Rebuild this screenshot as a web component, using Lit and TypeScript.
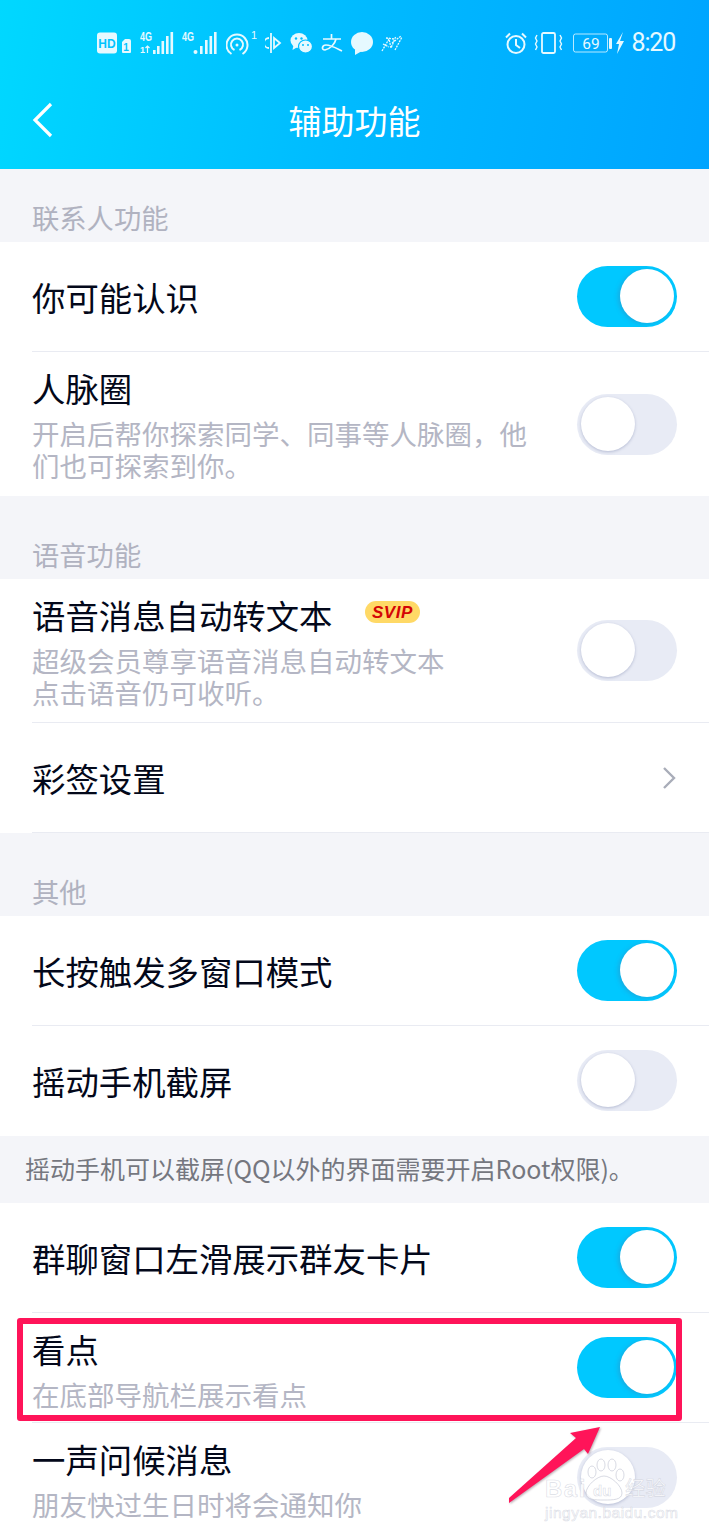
import { LitElement, html, css, nothing } from "lit";
import { customElement, property } from "lit/decorators.js";

@customElement("app-switch")
export class AppSwitch extends LitElement {
  static styles = css`
    :host {
      display: block;
      flex-shrink: 0;
    }
    .track {
      position: relative;
      width: 100px;
      height: 61px;
      border-radius: 31px;
      background: #e8ebf5;
    }
    .track.on {
      background: #00c8ff;
    }
    .thumb {
      position: absolute;
      top: 3px;
      left: 4px;
      width: 54px;
      height: 54px;
      border-radius: 50%;
      background: #fff;
      box-shadow: 0 1px 3px rgba(120, 130, 170, 0.45);
    }
    .on .thumb {
      left: 43px;
      box-shadow: -2px 1px 4px rgba(70, 120, 170, 0.35);
    }
  `;

  @property({ type: Boolean }) on = false;

  render() {
    return html`<div class="track ${this.on ? "on" : ""}"><div class="thumb"></div></div>`;
  }
}

@customElement("app-row")
export class AppRow extends LitElement {
  static styles = css`
    :host {
      display: block;
      background: #fff;
    }
    .row {
      display: flex;
      align-items: center;
      justify-content: space-between;
      box-sizing: border-box;
      height: 110px;
      margin-left: 32px;
      padding-right: 32px;
      border-bottom: 1px solid #e9ebf2;
    }
    :host([last]) .row {
      border-bottom-color: transparent;
    }
    :host([last]) .row.two {
      border-bottom: none;
    }
    .row.two {
      height: 144px;
    }
    .text {
      min-width: 0;
    }
    .sub .text {
      align-self: flex-start;
      padding-top: 14px;
    }
    .title {
      display: flex;
      align-items: center;
      font-size: 33.4px;
      line-height: 44px;
      color: #03081a;
    }
    .desc {
      margin-top: 7px;
      font-size: 27.5px;
      line-height: 32px;
      color: #b4b6c4;
      white-space: pre-line;
    }
    .svip {
      margin: 0 0 6px 32px;
      width: 55px;
      height: 22px;
    }
    .chev {
      width: 16px;
      height: 24px;
    }
  `;

  @property() label = "";
  @property() desc = "";
  @property({ type: Boolean }) on = false;
  @property({ type: Boolean }) svip = false;
  @property({ type: Boolean }) arrow = false;

  render() {
    const kind = this.desc ? (this.desc.includes("\n") ? "sub two" : "sub") : "";
    return html`
      <div class="row ${kind}">
        <div class="text">
          <div class="title">
            ${this.label}
            ${this.svip
              ? html`<svg class="svip" viewBox="0 0 55 22">
                  <rect width="55" height="22" rx="11" fill="#ffd966" />
                  <text
                    x="27.5"
                    y="17"
                    text-anchor="middle"
                    font-family="Liberation Sans, sans-serif"
                    font-size="17"
                    font-weight="700"
                    font-style="italic"
                    letter-spacing="0.6"
                    fill="#d40505"
                  >SVIP</text>
                </svg>`
              : nothing}
          </div>
          ${this.desc ? html`<div class="desc">${this.desc}</div>` : nothing}
        </div>
        ${this.arrow
          ? html`<svg class="chev" viewBox="0 0 16 24" fill="none">
              <path d="M3 2l10 10L3 22" stroke="#a9adb9" stroke-width="2.4" />
            </svg>`
          : html`<app-switch ?on=${this.on}></app-switch>`}
      </div>
    `;
  }
}

@customElement("app-root")
export class AppRoot extends LitElement {
  static styles = css`
    :host {
      display: block;
      width: 709px;
      height: 1536px;
      overflow: hidden;
      position: relative;
      background: #f4f5f9;
      font-family: "Noto Sans CJK SC", "Noto Sans", sans-serif;
    }
    .header {
      height: 169px;
      box-sizing: border-box;
      background: linear-gradient(100deg, #00d8ff 0%, #00baff 50%, #00a4ff 100%);
      color: #fff;
    }
    .status {
      display: flex;
      align-items: center;
      height: 86px;
      padding: 0 34px 0 97px;
      color: #e6f9ff;
    }
    .status svg {
      display: block;
      flex-shrink: 0;
    }
    .status-left {
      display: flex;
      align-items: center;
      gap: 8px;
      flex: 1;
    }
    .status-right {
      display: flex;
      align-items: center;
      gap: 7px;
    }
    .clock {
      font-family: "Roboto", sans-serif;
      font-size: 25px;
      line-height: 28px;
      letter-spacing: -1.2px;
    }
    .nav {
      position: relative;
      display: flex;
      justify-content: center;
      align-items: center;
      height: 67px;
    }
    .nav h1 {
      margin: 0;
      font-size: 33px;
      font-weight: 400;
    }
    .back {
      position: absolute;
      left: 32px;
      top: 16px;
    }
    .section {
      display: flex;
      align-items: flex-end;
      box-sizing: border-box;
      height: 73px;
      padding: 0 0 7px 32px;
      font-size: 27.3px;
      line-height: 36px;
      color: #b0b2c0;
    }
    .section.tall {
      height: 83px;
    }
    .note {
      display: flex;
      align-items: center;
      box-sizing: border-box;
      height: 67px;
      padding: 0 0 3px 25px;
      font-size: 25px;
      color: #75777f;
      white-space: nowrap;
    }
    .tail {
      height: 3px;
      background: #fff;
    }
    .overlay {
      position: absolute;
      left: 0;
      top: 0;
      pointer-events: none;
    }
    .arrow {
      filter: drop-shadow(1px 1px 1px rgba(60, 20, 40, 0.35));
    }
    .mark {
      position: absolute;
      left: 17px;
      top: 1318px;
      width: 665px;
      height: 103px;
      box-sizing: border-box;
      border: 6px solid #ff1459;
      border-radius: 3px;
    }
  `;

  private statusBar() {
    return html`
      <div class="status">
        <div class="status-left">
          <svg width="35" height="22" viewBox="0 0 35 22">
            <rect width="20" height="21" y="0.5" rx="3" fill="currentColor" />
            <text x="10" y="15.5" text-anchor="middle" font-family="Liberation Sans, sans-serif" font-size="12" font-weight="700" fill="#00c4ff">HD</text>
            <path d="M25 10l3-3h4a2 2 0 0 1 2 2v11a1 1 0 0 1-1 1h-7a1 1 0 0 1-1-1z" fill="currentColor" />
            <text x="29" y="19" text-anchor="middle" font-family="Liberation Sans, sans-serif" font-size="10" font-weight="700" fill="#00c4ff">1</text>
          </svg>
          <svg width="34" height="24" viewBox="0 0 34 24">
            <text x="0" y="10" textLength="12" lengthAdjust="spacingAndGlyphs" font-family="Liberation Sans, sans-serif" font-size="12.5" font-weight="700" fill="currentColor">4G</text>
            <text x="0" y="22" font-family="Liberation Sans, sans-serif" font-size="9" font-weight="700" fill="currentColor">1</text>
            <path d="M7.5 22v-7M5.5 17l2-2 2 2" stroke="currentColor" fill="none" stroke-width="1.2" />
            <rect x="13" y="19" width="2.6" height="4" fill="currentColor" />
            <rect x="17" y="15" width="2.6" height="8" fill="currentColor" />
            <rect x="21.5" y="10" width="2.6" height="13" fill="currentColor" />
            <rect x="26" y="5" width="2.6" height="18" fill="currentColor" />
            <rect x="30.5" y="1" width="2.6" height="22" fill="currentColor" />
          </svg>
          <svg width="36" height="24" viewBox="0 0 36 24">
            <text x="0" y="10" textLength="12" lengthAdjust="spacingAndGlyphs" font-family="Liberation Sans, sans-serif" font-size="12.5" font-weight="700" fill="currentColor">4G</text>
            <circle cx="13.5" cy="21" r="2" fill="currentColor" />
            <rect x="18" y="15" width="2.6" height="8" fill="currentColor" />
            <rect x="23" y="9" width="2.6" height="14" fill="currentColor" />
            <rect x="27.5" y="5" width="2.6" height="18" fill="currentColor" />
            <rect x="32" y="1" width="2.6" height="22" fill="currentColor" />
          </svg>
          <svg width="31" height="26" viewBox="0 0 31 26" fill="none" stroke="currentColor" stroke-width="2">
            <path d="M5.5 24a10.5 10.5 0 1 1 11 0" />
            <path d="M8.5 20a6 6 0 1 1 5 0" />
            <circle cx="11" cy="15" r="1.5" fill="currentColor" stroke="none" />
            <text x="25" y="9" font-family="Liberation Sans, sans-serif" font-size="11" fill="currentColor" stroke="none">1</text>
          </svg>
          <svg width="17" height="22" viewBox="0 0 17 22" fill="none" stroke="currentColor" stroke-width="1.8">
            <path d="M6 1v20" />
            <path d="M4 6a5 5 0 0 0 0 10" />
            <path d="M9 6l6 5-6 5z" />
          </svg>
          <svg width="23" height="22" viewBox="0 0 23 22" fill="currentColor">
            <ellipse cx="9" cy="8.5" rx="8.5" ry="7.5" />
            <path d="M3.5 13l-1 5 5-3z" />
            <ellipse cx="15.5" cy="14.5" rx="7" ry="6.5" stroke="#00bdff" stroke-width="1.2" />
            <circle cx="6" cy="6.5" r="1.2" fill="#00bdff" />
            <circle cx="11.5" cy="6.5" r="1.2" fill="#00bdff" />
            <circle cx="13" cy="13" r="1" fill="#00bdff" />
            <circle cx="18" cy="13" r="1" fill="#00bdff" />
          </svg>
          <svg width="22" height="20" viewBox="0 0 22 20" fill="none" stroke="currentColor" stroke-width="1.7">
            <path d="M10.5 1v5M2 6h18" />
            <path d="M15 6c-1 5-6 10-11 11-4 0-3-5 1-5 5 0 10 3 16 6" />
          </svg>
          <svg width="22" height="23" viewBox="0 0 22 23" fill="currentColor">
            <ellipse cx="11" cy="10" rx="11" ry="10" />
            <path d="M4 17l0 6 7-4z" />
          </svg>
          <svg width="22" height="20" viewBox="0 0 22 20" fill="none" stroke="currentColor" stroke-width="1.3" stroke-dasharray="2 1">
            <path d="M1 18L8 6l2 9 5-12" />
            <path d="M5 5l8 1M11 10l9-7M14 17l7-13M2 11l6 3" />
          </svg>
        </div>
        <div class="status-right">
          <svg width="22" height="22" viewBox="0 0 22 22" fill="none" stroke="currentColor" stroke-width="2">
            <circle cx="11" cy="12.5" r="8.5" />
            <path d="M11 7v6l4 3" />
            <path d="M1 5.5L5 1.5M21 5.5L17 1.5" />
          </svg>
          <svg width="32" height="22" viewBox="0 0 32 22" fill="none" stroke="currentColor" stroke-width="1.8">
            <rect x="8" y="1" width="13" height="20" rx="1.5" />
            <path d="M3 3l-1.5 3L3 9l-1.5 3L3 15l-1.5 3M26 3l1.5 3L26 9l1.5 3L26 15l1.5 3" stroke-width="1.4" />
          </svg>
          <svg width="52" height="22" viewBox="0 0 52 22">
            <rect x="0.5" y="2" width="34" height="18" rx="2" fill="none" stroke="currentColor" stroke-width="1" opacity="0.8" />
            <text x="18" y="17" text-anchor="middle" font-family="Roboto, sans-serif" font-size="15.5" fill="currentColor">69</text>
            <rect x="36" y="6" width="3" height="11" rx="1" fill="currentColor" />
            <path d="M50 0L43 12h3l-2 10 7-13h-4z" fill="currentColor" />
          </svg>
          <span class="clock">8:20</span>
        </div>
      </div>
    `;
  }

  render() {
    return html`
      <div class="header">
        ${this.statusBar()}
        <div class="nav">
          <svg class="back" width="22" height="36" viewBox="0 0 22 36" fill="none">
            <path d="M19 2L3 18l16 16" stroke="#fff" stroke-width="3.2" />
          </svg>
          <h1>辅助功能</h1>
        </div>
      </div>

      <div class="section">联系人功能</div>
      <app-row label="你可能认识" on></app-row>
      <app-row last label="人脉圈" desc="开启后帮你探索同学、同事等人脉圈，他
们也可探索到你。"></app-row>

      <div class="section tall">语音功能</div>
      <app-row label="语音消息自动转文本" svip desc="超级会员尊享语音消息自动转文本
点击语音仍可收听。"></app-row>
      <app-row label="彩签设置" arrow></app-row>

      <div class="section tall">其他</div>
      <app-row label="长按触发多窗口模式" on></app-row>
      <app-row last label="摇动手机截屏"></app-row>
      <div class="note">摇动手机可以截屏(QQ以外的界面需要开启Root权限)。</div>
      <app-row label="群聊窗口左滑展示群友卡片" on></app-row>
      <app-row label="看点" on desc="在底部导航栏展示看点"></app-row>
      <app-row last label="一声问候消息" desc="朋友快过生日时将会通知你"></app-row>
      <div class="tail"></div>

      <div class="mark"></div>
      <svg class="overlay" width="709" height="1536" viewBox="0 0 709 1536">
        <path class="arrow" d="M600 1427L570 1433 576 1438 509 1498 509 1503 584 1449 588 1454z" fill="#ff1459" />
        <g fill="rgba(255,255,255,0.7)" stroke="rgba(200,203,215,0.7)" stroke-width="1">
          <ellipse cx="592" cy="1472" rx="4" ry="6" />
          <ellipse cx="601" cy="1465" rx="4" ry="6" />
          <ellipse cx="612" cy="1465" rx="4" ry="6" />
          <ellipse cx="620" cy="1475" rx="4" ry="6" />
          <path d="M604 1476c7 0 18 10 18 17s-9 7-18 7-18 0-18-7 11-17 18-17z" />
        </g>
        <g font-family="Liberation Sans, sans-serif" fill="rgba(255,255,255,0.85)" stroke="rgba(200,203,215,0.65)" stroke-width="0.6">
          <text x="545" y="1497" font-size="24" font-weight="700" letter-spacing="1.5">Bai</text>
          <text x="593" y="1496" font-size="15" font-weight="700">du</text>
          <text x="625" y="1496" font-size="20.5" font-family="Noto Sans CJK SC, sans-serif">经验</text>
          <text x="545" y="1518" font-size="15.5" letter-spacing="0.5">jingyan.baidu.com</text>
        </g>
      </svg>
    `;
  }
}
